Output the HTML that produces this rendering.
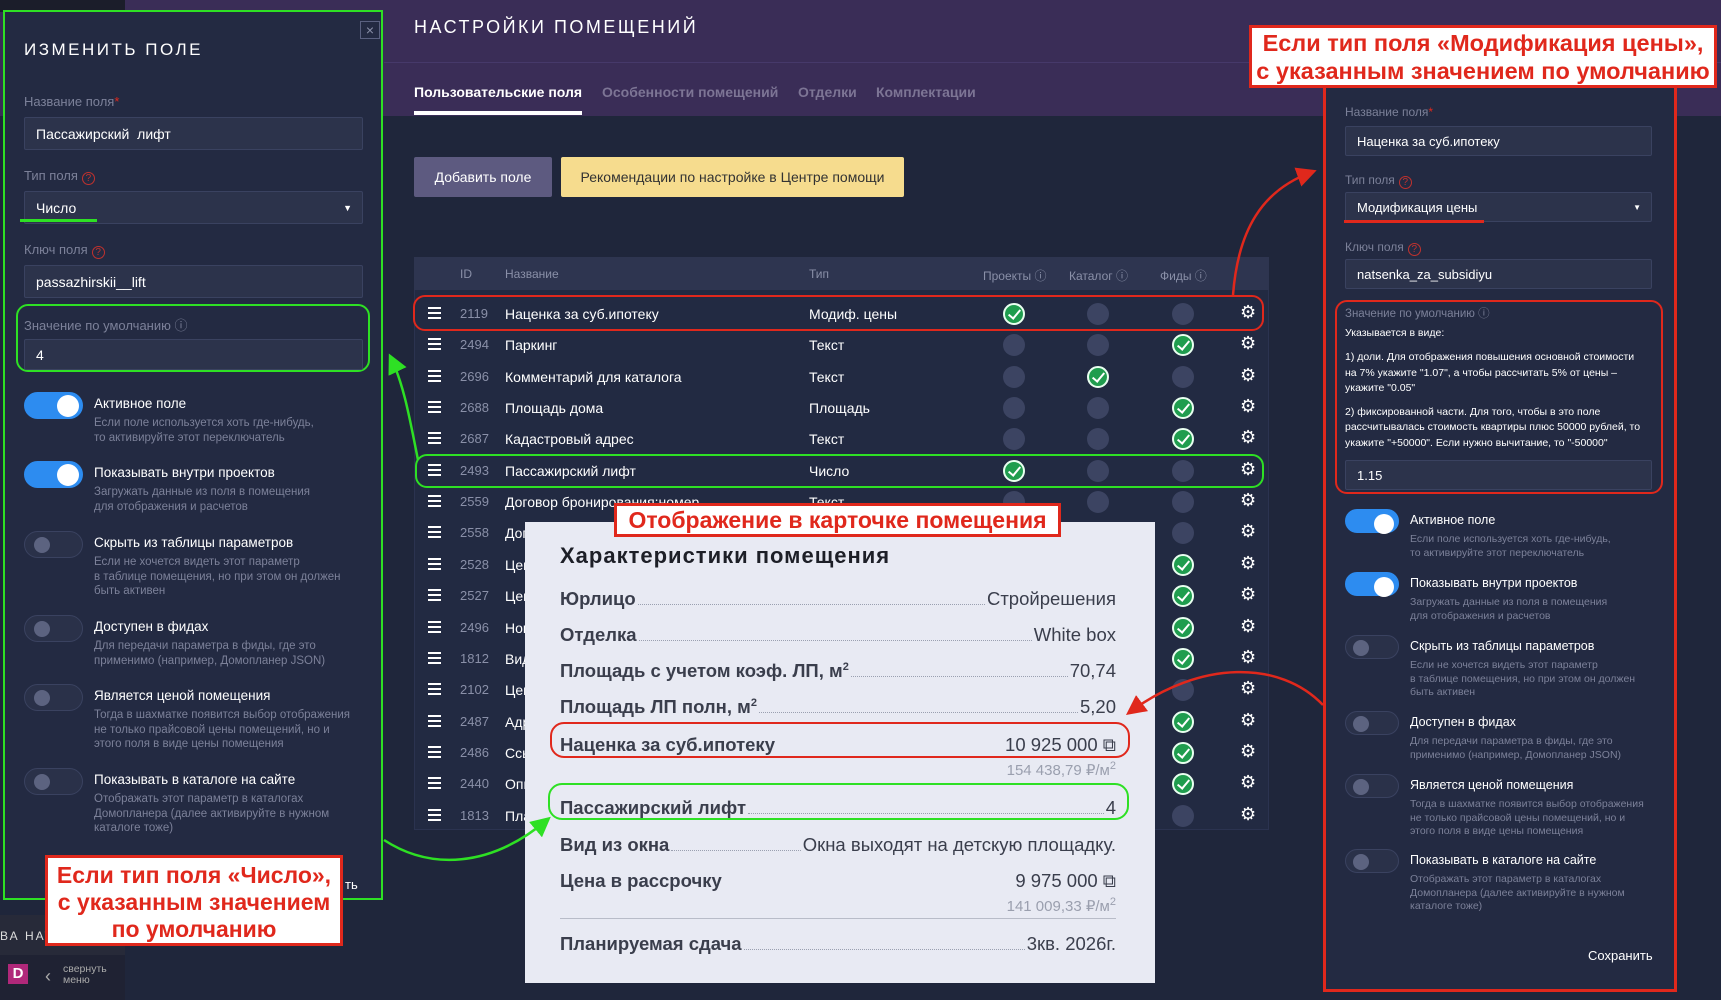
<!DOCTYPE html>
<html><head><meta charset="utf-8">
<style>
*{margin:0;padding:0;box-sizing:border-box}
body{width:1721px;height:1000px;overflow:hidden;background:#1f263b;font-family:"Liberation Sans",sans-serif;position:relative;color:#fff}
.a{position:absolute}
.hdr{left:0;top:0;width:1721px;height:116px;background:#3a2d57}
.lab{font-size:13px;color:#7c8199}
.inp{background:#2c334b;border:1px solid #3a4260;border-radius:2px;color:#fff;font-size:14px;padding-left:11px;display:flex;align-items:center}
.q{display:inline-block;width:13px;height:13px;border:1.5px solid #c0322e;border-radius:50%;color:#c0322e;font-size:10px;text-align:center;line-height:11px;margin-left:4px;vertical-align:-1px}
.tg{width:59px;height:27px;border-radius:14px;background:#2a3149;border:1px solid #3a4260}
.tg.on{background:#2d8cf0;border-color:#2d8cf0}
.tg::after{content:"";position:absolute;top:5px;left:9px;width:16px;height:16px;border-radius:50%;background:#5c6380}
.tg.on::after{top:2px;left:32px;width:22px;height:22px;background:#fff}
.tt{font-size:13.5px;color:#fff}
.td{font-size:11.5px;color:#7c8199;line-height:14.5px}
.narrow{font-family:"Liberation Sans Narrow","Liberation Sans",sans-serif}
.row{left:414px;width:855px;height:31px;font-size:14px}
.row span{position:absolute;top:8px}
.hb{left:14px;top:9px!important;width:13px;height:12px;border-top:2px solid #fff;border-bottom:2px solid #fff}
.hb::after{content:"";position:absolute;left:0;top:3px;width:13px;height:2px;background:#fff}
.ci{width:22px;height:22px;border-radius:50%;background:#3c4462}
.ok{width:22px;height:22px;border-radius:50%;background:#1f9d4e;border:2px solid #e9fff0}
.ok::after{content:"";position:absolute;left:6px;top:2px;width:5px;height:10px;border-right:2.5px solid #fff;border-bottom:2.5px solid #fff;transform:rotate(40deg)}
.gear{font-size:18px;color:#fff;font-weight:bold;font-family:"DejaVu Sans",sans-serif}
.ann{background:#fff;border:3px solid #e0281c;color:#e0281c;font-weight:bold;text-align:center}
.cr{left:560px;width:556px;display:flex;align-items:flex-end;font-size:18.5px;font-weight:bold;color:#3a3e4c}
.cr .l{flex:1;border-bottom:1px dotted #9aa0b0;margin:0 2px 5px}
.cr .v{font-weight:normal}
sup{font-size:11px}
</style></head><body>
<div class="a hdr"></div>
<div class="a" style="left:0;top:0;width:125px;height:12px;background:#1b1d2a"></div>
<div class="a" style="left:384px;top:62px;width:1337px;height:1px;background:#46396a"></div>
<div class="a" style="left:414px;top:17px;font-size:18px;letter-spacing:2.5px">НАСТРОЙКИ ПОМЕЩЕНИЙ</div>
<div class="a narrow" style="left:414px;top:84px;font-size:14px;font-weight:bold">Пользовательские поля</div>
<div class="a" style="left:414px;top:111px;width:168px;height:4px;background:#fff"></div>
<div class="a narrow" style="left:602px;top:84px;font-size:14px;font-weight:bold;color:#7d7595">Особенности помещений</div>
<div class="a narrow" style="left:798px;top:84px;font-size:14px;font-weight:bold;color:#7d7595">Отделки</div>
<div class="a narrow" style="left:876px;top:84px;font-size:14px;font-weight:bold;color:#7d7595">Комплектации</div>
<div class="a narrow" style="left:414px;top:157px;width:138px;height:40px;background:#5d5a80;border-radius:2px;font-size:14px;display:flex;align-items:center;justify-content:center">Добавить поле</div>
<div class="a narrow" style="left:561px;top:157px;width:343px;height:40px;background:#f6dc8e;border-radius:2px;font-size:14px;color:#333;display:flex;align-items:center;justify-content:center">Рекомендации по настройке в Центре помощи</div>
<div class="a" style="left:414px;top:257px;width:855px;height:573px;background:#222a42;border:1px solid #2b3350"></div>
<div class="a narrow" style="left:414px;top:257px;width:855px;height:33px;background:#2e3550;font-size:12px;color:#8a90a8">
<span class="a" style="left:46px;top:10px">ID</span><span class="a" style="left:91px;top:10px">Название</span><span class="a" style="left:395px;top:10px">Тип</span><span class="a" style="left:569px;top:10px">Проекты ⓘ</span><span class="a" style="left:655px;top:10px">Каталог ⓘ</span><span class="a" style="left:746px;top:10px">Фиды ⓘ</span></div>
<div id="rows"></div>
<script>
var d=[["2119","Наценка за суб.ипотеку","Модиф. цены",1,0,0],["2494","Паркинг","Текст",0,0,1],["2696","Комментарий для каталога","Текст",0,1,0],["2688","Площадь дома","Площадь",0,0,1],["2687","Кадастровый адрес","Текст",0,0,1],["2493","Пассажирский лифт","Число",1,0,0],["2559","Договор бронирования:номер","Текст",0,0,0],["2558","Договор","Текст",0,0,0],["2528","Цена","Текст",0,0,1],["2527","Цена","Текст",0,0,1],["2496","Номер","Текст",0,0,1],["1812","Вид","Текст",0,0,1],["2102","Цена","Текст",0,0,0],["2487","Адрес","Текст",0,0,1],["2486","Ссылка","Текст",0,0,1],["2440","Описание","Текст",0,0,1],["1813","Планируемая","Текст",0,0,0]];
var h="";d.forEach(function(r,i){var y=Math.round(298+31.35*i);h+='<div class="a row narrow" style="top:'+y+'px"><span class="a hb"></span><span style="left:46px;color:#8a90a8;font-size:13px">'+r[0]+'</span><span style="left:91px">'+r[1]+'</span><span style="left:395px">'+r[2]+'</span>';[600,684,769].forEach(function(x,k){h+='<span class="'+(r[3+k]?'ok':'ci')+'" style="left:'+(x-11)+'px;top:5px"></span>'});h+='<span class="gear" style="left:826px;top:4px">⚙</span></div>'});document.getElementById("rows").innerHTML=h;
</script>
<div class="a" style="left:413px;top:295px;width:851px;height:36px;border:2.5px solid #e0281c;border-radius:12px"></div>
<div class="a" style="left:415px;top:454px;width:849px;height:34px;border:2.5px solid #2ee024;border-radius:12px"></div>

<div class="a" style="left:525px;top:522px;width:630px;height:461px;background:#e8eaf3"></div>
<div class="a narrow" style="left:560px;top:543px;font-size:22px;font-weight:bold;color:#1d1f27;letter-spacing:1px">Характеристики помещения</div>
<div class="a cr narrow" style="top:588px"><span>Юрлицо</span><span class="l"></span><span class="v">Стройрешения</span></div>
<div class="a cr narrow" style="top:624px"><span>Отделка</span><span class="l"></span><span class="v">White box</span></div>
<div class="a cr narrow" style="top:660px"><span>Площадь с учетом коэф. ЛП, м<sup>2</sup></span><span class="l"></span><span class="v">70,74</span></div>
<div class="a cr narrow" style="top:696px"><span>Площадь ЛП полн, м<sup>2</sup></span><span class="l"></span><span class="v">5,20</span></div>
<div class="a cr narrow" style="top:734px"><span>Наценка за суб.ипотеку</span><span style="flex:1"></span><span class="v">10 925 000 ⧉</span></div>
<div class="a narrow" style="left:900px;width:216px;text-align:right;top:760px;font-size:15px;color:#9a9fae">154 438,79 ₽/м<sup>2</sup></div>
<div class="a cr narrow" style="top:797px"><span>Пассажирский лифт</span><span class="l"></span><span class="v">4</span></div>
<div class="a cr narrow" style="top:834px"><span>Вид из окна</span><span class="l"></span><span class="v">Окна выходят на детскую площадку.</span></div>
<div class="a cr narrow" style="top:870px"><span>Цена в рассрочку</span><span style="flex:1"></span><span class="v">9 975 000 ⧉</span></div>
<div class="a narrow" style="left:900px;width:216px;text-align:right;top:896px;font-size:15px;color:#9a9fae">141 009,33 ₽/м<sup>2</sup></div>
<div class="a" style="left:560px;top:918px;width:556px;height:1px;background:#b8bcc8"></div>
<div class="a cr narrow" style="top:933px"><span>Планируемая сдача</span><span class="l"></span><span class="v">3кв. 2026г.</span></div>
<div class="a" style="left:550px;top:722px;width:580px;height:36px;border:2.5px solid #e0281c;border-radius:14px"></div>
<div class="a" style="left:548px;top:783px;width:581px;height:37px;border:2.5px solid #2ee024;border-radius:14px"></div>
<div class="a ann narrow" style="left:614px;top:503px;width:447px;height:34px;font-size:23px;line-height:28px">Отображение в карточке помещения</div>

<div class="a" style="left:0;top:915px;width:125px;height:85px;background:#272a39"></div>
<div class="a" style="left:0;top:955px;width:125px;height:45px;background:#1f2233"></div>
<div class="a" style="left:0;top:929px;font-size:12px;letter-spacing:2px;color:#ddd">ВА НАТ</div>
<div class="a" style="left:8px;top:964px;width:20px;height:20px;background:#b0287a;font-weight:bold;font-size:15px;text-align:center;line-height:20px">D</div>
<div class="a" style="left:45px;top:966px;font-size:18px;color:#aaa">‹</div>
<div class="a" style="left:63px;top:964px;font-size:10.5px;color:#aaa;line-height:11px">свернуть<br>меню</div>
<div class="a" style="left:3px;top:10px;width:380px;height:890px;background:#232a42;border:2.5px solid #2ee024"></div>
<div class="a" style="left:360px;top:21px;width:20px;height:18px;border:1px solid #5a6180;color:#8a90a8;font-size:14px;text-align:center;line-height:16px">×</div>
<div class="a" style="left:24px;top:40px;font-size:17px;letter-spacing:2.5px">ИЗМЕНИТЬ ПОЛЕ</div>
<div class="a lab" style="left:24px;top:94px">Название поля<span style="color:#e0281c">*</span></div>
<div class="a inp" style="left:24px;top:117px;width:339px;height:33px">Пассажирский&nbsp; лифт</div>
<div class="a lab" style="left:24px;top:168px">Тип поля<span class="q">?</span></div>
<div class="a inp" style="left:24px;top:191px;width:339px;height:33px">Число<span style="position:absolute;right:10px;font-size:9px">▼</span></div>
<div class="a" style="left:20px;top:219px;width:77px;height:2.5px;background:#2ee024"></div>
<div class="a lab" style="left:24px;top:242px">Ключ поля<span class="q">?</span></div>
<div class="a inp" style="left:24px;top:265px;width:339px;height:33px">passazhirskii__lift</div>
<div class="a" style="left:16px;top:304px;width:354px;height:68px;border:2.5px solid #2ee024;border-radius:12px"></div>
<div class="a lab" style="left:24px;top:315px">Значение по умолчанию ⓘ</div>
<div class="a inp" style="left:24px;top:339px;width:339px;height:31px">4</div>
<div id="lt"></div>
<div class="a" style="left:345px;top:877px;font-size:13px">ть</div>
<div class="a ann" style="left:45px;top:855px;width:298px;height:91px;font-size:23px;line-height:27px;padding-top:4px">Если тип поля «Число»,<br>с указанным значением<br>по умолчанию</div>

<div class="a" style="left:1323px;top:88px;width:354px;height:904px;background:#232a42;border:3px solid #e0281c;border-top:none"></div>
<div class="a lab" style="left:1345px;top:105px;font-size:12px">Название поля<span style="color:#e0281c">*</span></div>
<div class="a inp" style="left:1345px;top:126px;width:307px;height:30px;font-size:13px">Наценка за суб.ипотеку</div>
<div class="a lab" style="left:1345px;top:173px;font-size:12px">Тип поля<span class="q">?</span></div>
<div class="a inp" style="left:1345px;top:192px;width:307px;height:30px;font-size:13px">Модификация цены<span style="position:absolute;right:10px;font-size:8px">▼</span></div>
<div class="a" style="left:1344px;top:220px;width:140px;height:2.5px;background:#e0281c"></div>
<div class="a lab" style="left:1345px;top:240px;font-size:12px">Ключ поля<span class="q">?</span></div>
<div class="a inp" style="left:1345px;top:259px;width:307px;height:30px;font-size:13px">natsenka_za_subsidiyu</div>
<div class="a" style="left:1335px;top:300px;width:328px;height:194px;border:2.5px solid #e0281c;border-radius:12px"></div>
<div class="a lab" style="left:1345px;top:305px;font-size:11.5px">Значение по умолчанию ⓘ</div>
<div class="a" style="left:1345px;top:326px;width:298px;font-size:10.5px;line-height:15.3px;color:#fff">Указывается в виде:<div style="height:9px"></div>1) доли. Для отображения повышения основной стоимости на 7% укажите "1.07", а чтобы рассчитать 5% от цены – укажите "0.05"<div style="height:9px"></div>2) фиксированной части. Для того, чтобы в это поле рассчитывалась стоимость квартиры плюс 50000 рублей, то укажите "+50000". Если нужно вычитание, то "-50000"</div>
<div class="a inp" style="left:1345px;top:460px;width:307px;height:30px;font-size:13px">1.15</div>
<div id="rt"></div>
<div class="a" style="left:1588px;top:948px;font-size:13px">Сохранить</div>
<div class="a ann" style="left:1249px;top:25px;width:468px;height:63px;font-size:23.5px;line-height:28px;padding-top:1px">Если тип поля «Модификация цены»,<br>с указанным значением по умолчанию</div>
<script>
var T=[["Активное поле",["Если поле используется хоть где-нибудь,","то активируйте этот переключатель"],1],["Показывать внутри проектов",["Загружать данные из поля в помещения","для отображения и расчетов"],1],["Скрыть из таблицы параметров",["Если не хочется видеть этот параметр","в таблице помещения, но при этом он должен","быть активен"],0],["Доступен в фидах",["Для передачи параметра в фиды, где это","применимо (например, Домопланер JSON)"],0],["Является ценой помещения",["Тогда в шахматке появится выбор отображения","не только прайсовой цены помещений, но и","этого поля в виде цены помещения"],0],["Показывать в каталоге на сайте",["Отображать этот параметр в каталогах","Домопланера (далее активируйте в нужном","каталоге тоже)"],0]];
function mk(el,x,ys,w,fs,ds){var h="";T.forEach(function(t,i){var y=ys[i];h+='<div class="a tg'+(t[2]?' on':'')+'" style="left:'+x+'px;top:'+y+'px;width:'+w+'px"></div><div class="a tt" style="left:'+(x+w+11)+'px;top:'+(y+4)+'px;font-size:'+fs+'px">'+t[0]+'</div><div class="a td" style="left:'+(x+w+11)+'px;top:'+(y+24)+'px;font-size:'+ds+'px;line-height:'+(ds+3)+'px">'+t[1].join("<br>")+'</div>'});document.getElementById(el).innerHTML=h}
mk("lt",24,[392,461,531,615,684,768],59,13.5,11.5);
mk("rt",1345,[509,572,635,711,774,849],54,12.5,10.5);
</script>
<style>#rt .tg{height:24px}#rt .tg.on::after{left:28px;width:20px;height:20px}#rt .tg::after{top:4px;left:7px}</style>

<svg class="a" style="left:0;top:0" width="1721" height="1000">
<defs>
<marker id="mr" markerWidth="8" markerHeight="8" refX="6" refY="4" orient="auto"><path d="M0,0 L8,4 L0,8 z" fill="#e0281c"/></marker>
<marker id="mg" markerWidth="8" markerHeight="8" refX="6" refY="4" orient="auto"><path d="M0,0 L8,4 L0,8 z" fill="#2ee024"/></marker>
</defs>
<path d="M1233,295 C1238,230 1262,190 1312,172" stroke="#e0281c" stroke-width="2.5" fill="none" marker-end="url(#mr)"/>
<path d="M1323,705 C1280,660 1200,660 1130,712" stroke="#e0281c" stroke-width="2.5" fill="none" marker-end="url(#mr)"/>
<path d="M418,460 C410,420 404,385 391,358" stroke="#2ee024" stroke-width="2.5" fill="none" marker-end="url(#mg)"/>
<path d="M384,840 C430,870 490,868 547,820" stroke="#2ee024" stroke-width="2.5" fill="none" marker-end="url(#mg)"/>
</svg>
</body></html>
